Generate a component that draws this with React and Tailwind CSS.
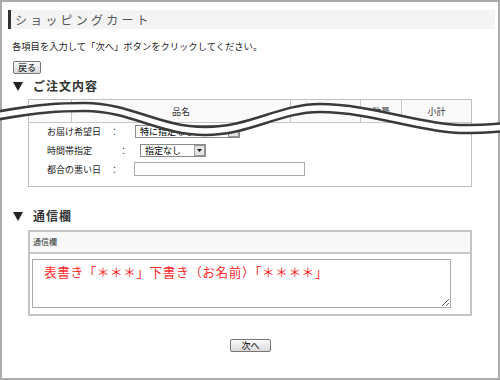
import React from "react";

const jp = "font-['Noto_Sans_CJK_JP','Noto_Sans',sans-serif]";

function Tri() {
    return (
        <svg width="10" height="9" viewBox="0 0 10 9" className="shrink-0">
            <polygon points="0,0 10,0 5,9" fill="#222" />
        </svg>
    );
}

function Btn({ children }) {
    return (
        <button className="h-[13px] px-[4px] flex items-center justify-center border border-[#777] rounded-[2px] bg-gradient-to-b from-[#fbfbfb] to-[#d9d9d9] text-[9px] leading-none text-black">
            {children}
        </button>
    );
}

function Select({ label, width }) {
    return (
        <div
            className={`h-[13px] flex items-center border border-[#8a8a8a] bg-white ${width}`}
        >
            <span className="flex-1 pl-[4px] text-[9px] leading-none text-black whitespace-nowrap">
                {label}
            </span>
            <span className="w-[11px] h-[11px] flex items-center justify-center border border-[#999] bg-[#e4e4e4]">
                <svg width="5" height="3" viewBox="0 0 5 3">
                    <polygon points="0,0 5,0 2.5,3" fill="#111" />
                </svg>
            </span>
        </div>
    );
}

export default function App() {
    return (
        <div className={`relative w-[500px] h-[380px] bg-white ${jp}`}>
            <div className="w-full h-full border-2 border-[#ababab] flex flex-col">
                {/* title */}
                <div className="mt-[8px] ml-[6px] mr-[3px] h-[19px] flex items-center bg-[#f4f4f4]">
                    <div className="w-[3px] h-full bg-[#333]"></div>
                    <span className="ml-[4px] text-[12px] tracking-[3.2px] text-[#555] leading-none">
                        ショッピングカート
                    </span>
                </div>
                <p className="mt-[13px] ml-[10px] text-[9.3px] leading-none text-[#222]">
                    各項目を入力して「次へ」ボタンをクリックしてください。
                </p>
                <div className="mt-[10px] ml-[11px] flex">
                    <Btn>戻る</Btn>
                </div>

                {/* order */}
                <div className="mt-[5px] ml-[11px] flex items-center gap-[10px] h-[14px]">
                    <Tri />
                    <span className="text-[12px] font-bold tracking-[1px] text-[#333] leading-none">
                        ご注文内容
                    </span>
                </div>
                <div className="mt-[6px] ml-[26px] w-[444px] h-[88px] border border-[#c0c0c0] flex flex-col">
                    <div className="h-[23px] flex border-b border-[#c8c8c8] bg-[#fafafa] text-[9px] text-[#333]">
                        <div className="w-[43px] border-r border-[#c8c8c8]"></div>
                        <div className="w-[219px] border-r border-[#c8c8c8] flex items-center justify-center">
                            品名
                        </div>
                        <div className="w-[70px] border-r border-[#c8c8c8]"></div>
                        <div className="w-[41px] border-r border-[#c8c8c8] flex items-center justify-center">
                            数量
                        </div>
                        <div className="flex-1 flex items-center justify-center">小計</div>
                    </div>
                    <div className="flex flex-col gap-[3px] pl-[18px] text-[9px] text-[#222]">
                        <div className="h-[16px] flex items-center">
                            <span className="w-[88px] leading-none">お届け希望日　：</span>
                            <Select label="特に指定なし" width="w-[105px]" />
                        </div>
                        <div className="h-[16px] flex items-center">
                            <span className="w-[93px] leading-none">時間帯指定　　　：</span>
                            <Select label="指定なし" width="w-[66px]" />
                        </div>
                        <div className="h-[16px] flex items-center">
                            <span className="w-[87px] leading-none">都合の悪い日　：</span>
                            <div className="w-[171px] h-[14px] border border-[#aaa] bg-white"></div>
                        </div>
                    </div>
                </div>

                {/* message */}
                <div className="mt-[22px] ml-[11px] flex items-center gap-[10px] h-[14px]">
                    <Tri />
                    <span className="text-[12px] font-bold tracking-[1px] text-[#333] leading-none">
                        通信欄
                    </span>
                </div>
                <div className="mt-[7px] ml-[26px] w-[444px] border-2 border-[#c4c4c4] flex flex-col">
                    <div className="h-[22px] flex items-center pl-[3px] bg-[#f8f8f8] border-b-2 border-[#c8c8c8] text-[8px] text-[#333] leading-none">
                        通信欄
                    </div>
                    <div className="pt-[5px] pb-[6px] pl-[2px]">
                        <textarea
                            readOnly
                            defaultValue="表書き「＊＊＊」下書き（お名前）「＊＊＊＊」"
                            className="block w-[419px] h-[49px] border border-[#aaa] pt-[4px] pl-[11px] text-[12.6px] tracking-[0.6px] leading-[16px] text-[#ff2a2a] outline-none resize-y"
                        />
                    </div>
                </div>
                <div className="mt-[23px] flex justify-center pl-[1px]">
                    <Btn>
                        <span className="px-[6px]">次へ</span>
                    </Btn>
                </div>
            </div>

            {/* torn wave over the table */}
            <svg
                className="absolute top-0 left-0 pointer-events-none"
                width="500"
                height="160"
                viewBox="0 0 500 160"
            >
                <path
                    d="M-5 116 C40 108, 60 107, 85 107 C130 107, 160 131, 205 131 C250 131, 280 108, 320 108 C370 108, 420 128, 460 129 C480 129, 495 128, 505 127"
                    fill="none"
                    stroke="#fff"
                    strokeWidth="9"
                />
                <path
                    d="M-5 112 C40 104, 60 103, 85 103 C130 103, 160 127, 205 127 C250 127, 280 104, 320 104 C370 104, 420 124, 460 125 C480 125, 495 124, 505 123"
                    fill="none"
                    stroke="#3a3a3a"
                    strokeWidth="2.5"
                />
                <path
                    d="M-5 120 C40 112, 60 111, 85 111 C130 111, 160 135, 205 135 C250 135, 280 112, 320 112 C370 112, 420 132, 460 133 C480 133, 495 132, 505 131"
                    fill="none"
                    stroke="#3a3a3a"
                    strokeWidth="2.5"
                />
            </svg>
        </div>
    );
}
